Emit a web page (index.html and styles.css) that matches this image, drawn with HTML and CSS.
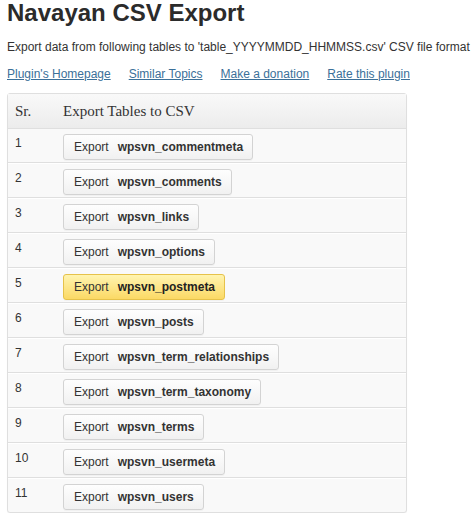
FILE: index.html
```html
<!DOCTYPE html>
<html>
<head>
<meta charset="utf-8">
<link rel="stylesheet" href="styles.css">
</head>
<body>
<div class="wrap">
  <h2 class="title">Navayan CSV Export</h2>
  <p class="desc">Export data from following tables to 'table_YYYYMMDD_HHMMSS.csv' CSV file format</p>
  <p class="links">
    <a href="#">Plugin's Homepage</a>
    <a href="#">Similar Topics</a>
    <a href="#">Make a donation</a>
    <a href="#">Rate this plugin</a>
  </p>
  <table class="tbl">
    <colgroup><col class="col-sr"><col></colgroup>
    <thead>
      <tr><th class="c-sr">Sr.</th><th>Export Tables to CSV</th></tr>
    </thead>
    <tbody>
      <tr><td class="c-sr">1</td><td><button class="btn">Export<b>wpsvn_commentmeta</b></button></td></tr>
      <tr><td class="c-sr">2</td><td><button class="btn">Export<b>wpsvn_comments</b></button></td></tr>
      <tr><td class="c-sr">3</td><td><button class="btn">Export<b>wpsvn_links</b></button></td></tr>
      <tr><td class="c-sr">4</td><td><button class="btn">Export<b>wpsvn_options</b></button></td></tr>
      <tr><td class="c-sr">5</td><td><button class="btn btn-hl">Export<b>wpsvn_postmeta</b></button></td></tr>
      <tr><td class="c-sr">6</td><td><button class="btn">Export<b>wpsvn_posts</b></button></td></tr>
      <tr><td class="c-sr">7</td><td><button class="btn">Export<b>wpsvn_term_relationships</b></button></td></tr>
      <tr><td class="c-sr">8</td><td><button class="btn">Export<b>wpsvn_term_taxonomy</b></button></td></tr>
      <tr><td class="c-sr">9</td><td><button class="btn">Export<b>wpsvn_terms</b></button></td></tr>
      <tr><td class="c-sr">10</td><td><button class="btn">Export<b>wpsvn_usermeta</b></button></td></tr>
      <tr><td class="c-sr">11</td><td><button class="btn">Export<b>wpsvn_users</b></button></td></tr>
    </tbody>
  </table>
</div>
</body>
</html>
```
FILE: styles.css
```css
html, body {
  margin: 0;
  padding: 0;
  background: #fff;
}
body {
  font-family: "Liberation Sans", Arial, sans-serif;
  color: #333;
}
.wrap {
  padding: 0 7px;
}
.title {
  margin: 0;
  font-size: 24px;
  line-height: 26px;
  font-weight: bold;
  color: #2b2b2b;
}
.desc {
  margin: 13px 0 0;
  font-size: 12px;
  line-height: 16px;
  white-space: nowrap;
  color: #333;
}
.links {
  margin: 11px 0 0;
  font-size: 12px;
  line-height: 16px;
  display: flex;
  gap: 18px;
  white-space: nowrap;
}
.links a {
  color: #3b7099;
  text-decoration: underline;
}
.tbl {
  margin-top: 11px;
  width: 400px;
  table-layout: fixed;
  border: 1px solid #dfdfdf;
  border-radius: 3px;
  border-spacing: 0;
  background: #f9f9f9;
  box-shadow: 0 1px 1px rgba(0,0,0,0.04);
}
.col-sr {
  width: 47px;
}
.tbl th {
  text-align: left;
  font-family: "Liberation Serif", "DejaVu Serif", Georgia, serif;
  font-weight: normal;
  font-size: 15px;
  color: #333;
  height: 34px;
  padding: 0 8px;
  background: linear-gradient(#f9f9f9, #ececec);
  border-bottom: 1px solid #dfdfdf;
}
.tbl th.c-sr {
  padding: 0 4px 0 7px;
}
.tbl td {
  vertical-align: top;
  padding: 5px 8px 2px;
  border-top: 1px solid #fff;
  border-bottom: 1px solid #dfdfdf;
  font-size: 12px;
  line-height: 14px;
}
.tbl tbody tr:first-child td {
  border-top: none;
}
.tbl tbody tr:last-child td {
  border-bottom: none;
}
.tbl td.c-sr {
  padding: 7px 4px 2px 7px;
  color: #333;
}
.btn {
  display: flex;
  width: fit-content;
  box-sizing: border-box;
  margin: 0;
  align-items: center;
  height: 26px;
  padding: 0 9px 0 10px;
  font-family: "Liberation Sans", Arial, sans-serif;
  font-size: 12px;
  line-height: 14px;
  color: #333;
  border: 1px solid #d3d3d3;
  border-radius: 3px;
  background: linear-gradient(#fefefe, #f1f1f1);
  box-shadow: 0 1px 0 rgba(0,0,0,0.03);
}
.btn b {
  margin-left: 9px;
  font-weight: bold;
  color: #333;
}
.btn-hl {
  border-color: #e6c24a;
  background: linear-gradient(#fff4b0, #fbd965);
}
.btn-hl b {
  color: #222;
}
```
